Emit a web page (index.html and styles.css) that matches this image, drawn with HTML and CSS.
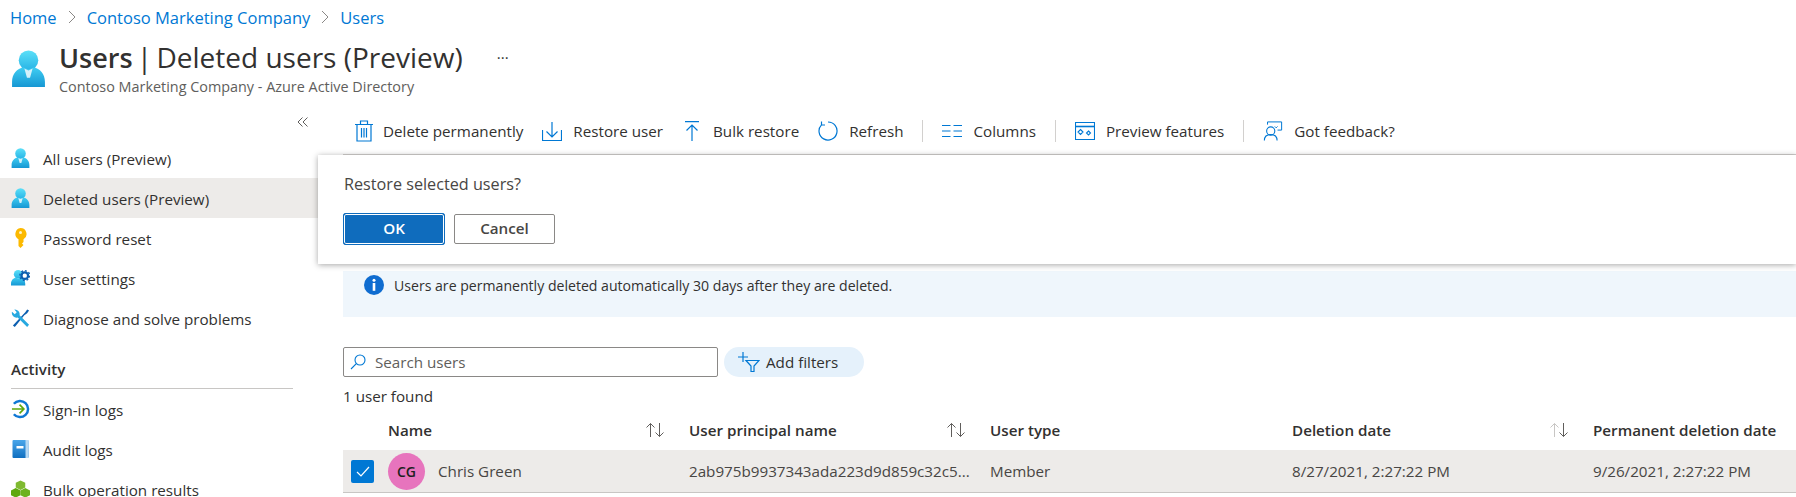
FILE: index.html
```html
<!DOCTYPE html>
<html lang="en">
<head>
    <meta charset="UTF-8">
    <meta name="viewport" content="width=device-width, initial-scale=1.0">
    <title>Users | Deleted users (Preview)</title>
    <link rel="stylesheet" href="styles.css">
</head>
<body>
    <svg class="defs" width="0" height="0" aria-hidden="true">
        <defs>
            <linearGradient id="userTop" x1="0" y1="0" x2="0" y2="1">
                <stop offset="0" stop-color="#5ce0f8"/>
                <stop offset="1" stop-color="#28b4e6"/>
            </linearGradient>
            <linearGradient id="userBody" x1="0" y1="0" x2="0" y2="1">
                <stop offset="0" stop-color="#3fcdf2"/>
                <stop offset="1" stop-color="#1697d3"/>
            </linearGradient>
            <linearGradient id="bookFill" x1="0" y1="0" x2="0" y2="1">
                <stop offset="0" stop-color="#4aa6ea"/>
                <stop offset="1" stop-color="#0f6fc0"/>
            </linearGradient>
            <symbol id="user" viewBox="0 0 32 36">
                <circle cx="16" cy="10" r="9.5" fill="url(#userTop)"/>
                <path d="M0 36v-5c0-8 5-13 11-14l5 2 5-2c6 1 11 6 11 14v5z" fill="url(#userBody)"/>
                <path d="M12 18l4 2 4-2-2.5 9h-3z" fill="#d5f1fa"/>
            </symbol>
        </defs>
    </svg>

    <nav class="crumbs">
        <a href="#">Home</a>
        <svg class="crumb-sep" viewBox="0 0 8 14"><path d="M1 1l6 6-6 6" fill="none" stroke="#8a8886" stroke-width="1"/></svg>
        <a href="#">Contoso Marketing Company</a>
        <svg class="crumb-sep" viewBox="0 0 8 14"><path d="M1 1l6 6-6 6" fill="none" stroke="#8a8886" stroke-width="1"/></svg>
        <a href="#">Users</a>
    </nav>

    <header class="page-head">
        <svg class="head-icon"><use href="#user"/></svg>
        <div class="head-text">
            <div class="head-line">
                <h1><b>Users</b><span class="bar"> | </span>Deleted users (Preview)</h1>
                <span class="more">···</span>
            </div>
            <p>Contoso Marketing Company - Azure Active Directory</p>
        </div>
    </header>

    <div class="layout">
        <aside class="sidebar">
            <div class="collapse">
                <svg viewBox="0 0 12 12" width="12" height="12"><path d="M5.5 1.5L1 6l4.500 4.500M10.500 1.500L6 6l4.500 4.500" fill="none" stroke="#605e5c" stroke-width="1"/></svg>
            </div>
            <a class="side-item" href="#"><svg class="side-icon"><use href="#user"/></svg>All users (Preview)</a>
            <a class="side-item active" href="#"><svg class="side-icon"><use href="#user"/></svg>Deleted users (Preview)</a>
            <a class="side-item" href="#">
                <svg class="side-icon" viewBox="0 0 18 20"><path d="M9 0a6 6 0 0 1 3 11.200V14l-1.500 1.500L12 17l-3 3-2-2V11.200A6 6 0 0 1 9 0z" fill="#fcb900"/><circle cx="9" cy="4.500" r="1.500" fill="#fff3c4"/></svg>
                Password reset
            </a>
            <a class="side-item" href="#">
                <svg class="side-icon" viewBox="0 0 20 20">
                    <circle cx="7.500" cy="6" r="4.500" fill="url(#userTop)"/>
                    <path d="M0 18v-2c0-4 3-6 5-6.500l2.500 1 2.500-1c3 .7 5 3 5 6.500v2z" fill="url(#userBody)"/>
                    <circle cx="14.500" cy="7.500" r="3.500" fill="none" stroke="#0c5fb0" stroke-width="2.400"/>
                    <circle cx="14.500" cy="7.500" r="5.200" fill="none" stroke="#0c5fb0" stroke-width="1.400" stroke-dasharray="2 2"/>
                </svg>
                User settings
            </a>
            <a class="side-item" href="#">
                <svg class="side-icon" viewBox="0 0 20 20">
                    <path d="M2 18L15 4l2-3 2 1-2 3-3 2L4 19.500z" fill="#0c5fb0"/>
                    <path d="M1 3.500L4 6l2-2-2.500-3A5 5 0 0 1 9 7l10 10-2 2.500L7 9.500A5 5 0 0 1 1 3.500z" fill="#27a9e0"/>
                </svg>
                Diagnose and solve problems
            </a>
            <div class="side-title">Activity</div>
            <a class="side-item" href="#">
                <svg class="side-icon" viewBox="0 0 20 20">
                    <path d="M3 4.500a8.500 8.500 0 1 1 0 11" fill="none" stroke="#0f78d4" stroke-width="2.600"/>
                    <path d="M1 10h12M9 5.500l4.500 4.500L9 14.500" fill="none" stroke="#5ea80d" stroke-width="1.800"/>
                </svg>
                Sign-in logs
            </a>
            <a class="side-item" href="#">
                <svg class="side-icon" viewBox="0 0 18 20">
                    <rect x="1" y="1" width="16" height="18" rx="1" fill="url(#bookFill)"/>
                    <rect x="14" y="1" width="3" height="18" fill="#b5d8f3"/>
                    <rect x="5" y="7" width="7" height="2.500" fill="#fff"/>
                </svg>
                Audit logs
            </a>
            <a class="side-item" href="#">
                <svg class="side-icon" viewBox="0 0 20 20">
                    <path d="M10 1l5 2.500v5L10 11 5 8.500v-5z" fill="#7fba30"/>
                    <path d="M5 9l5 2.500v5L5 19 0 16.500v-5z" fill="#5ea80d"/>
                    <path d="M15 9l5 2.500v5L15 19l-5-2.500v-5z" fill="#6cb21f"/>
                </svg>
                Bulk operation results
            </a>
        </aside>

        <main class="content">
            <div class="toolbar">
                <button class="tool">
                    <svg viewBox="0 0 18 22" class="tool-icon tool-trash"><path d="M0 4.500h18M5.500 4.500V1h7v3.500M2 4.500V21h14V4.500M6.500 8v9.500M9 8v9.500M11.500 8v9.500" fill="none" stroke="#0078d4" stroke-width="1.200"/></svg>
                    Delete permanently
                </button>
                <button class="tool">
                    <svg viewBox="0 0 20 20" class="tool-icon"><path d="M.500 9v10.500h19V9M10 1v15M4.500 10.500L10 16l5.500-5.500" fill="none" stroke="#0078d4" stroke-width="1.200"/></svg>
                    Restore user
                </button>
                <button class="tool">
                    <svg viewBox="0 0 20 20" class="tool-icon"><path d="M3 .700h14M10 20V4M4.500 9.500L10 4l5.500 5.500" fill="none" stroke="#0078d4" stroke-width="1.200"/></svg>
                    Bulk restore
                </button>
                <button class="tool">
                    <svg viewBox="0 0 20 20" class="tool-icon"><path d="M10 1a9 9 0 1 1-6.500 2.800M3.500 .500v3.500H7" fill="none" stroke="#0078d4" stroke-width="1.200"/></svg>
                    Refresh
                </button>
                <span class="tool-sep"></span>
                <button class="tool">
                    <svg viewBox="0 0 20 14" class="tool-icon tool-flat"><path d="M0 1.500h8.500M11.500 1.500H20M0 7h8.500M11.500 7H20M0 12.500h8.500M11.500 12.500H20" fill="none" stroke="#0078d4" stroke-width="1.200"/></svg>
                    Columns
                </button>
                <span class="tool-sep"></span>
                <button class="tool">
                    <svg viewBox="0 0 20 18" class="tool-icon"><path d="M.500.500h19v17H.500z" fill="none" stroke="#0078d4" stroke-width="1.100"/><path d="M.500 4.500h19" fill="none" stroke="#0078d4" stroke-width="1.600"/><path d="M5.500 7.500l2.500 2.500-2.500 2.500L3 10zM13.500 9l2 2-2 2-2-2z" fill="none" stroke="#0078d4" stroke-width="1.100"/></svg>
                    Preview features
                </button>
                <span class="tool-sep"></span>
                <button class="tool">
                    <svg viewBox="0 0 20 22" class="tool-icon"><path d="M4 4V1h15.500v9H15M12 6l1.500 1.500L15 6" fill="none" stroke="#0078d4" stroke-width="1.100"/><circle cx="7.500" cy="11" r="4.500" fill="none" stroke="#0078d4" stroke-width="1.200"/><path d="M.500 21.500c0-4 2.500-6.500 7-6.500s7 2.500 7 6.500" fill="none" stroke="#0078d4" stroke-width="1.200"/></svg>
                    Got feedback?
                </button>
            </div>

            <div class="banner">
                <svg viewBox="0 0 20 20" class="banner-icon"><circle cx="10" cy="10" r="10" fill="#0f6cd0"/><circle cx="10" cy="5.300" r="1.500" fill="#fff"/><rect x="8.700" y="8" width="2.600" height="7.800" fill="#fff"/></svg>
                Users are permanently deleted automatically 30 days after they are deleted.
            </div>

            <div class="filters">
                <label class="search">
                    <svg viewBox="0 0 16 16" class="search-icon"><circle cx="10" cy="6" r="5" fill="none" stroke="#0078d4" stroke-width="1.100"/><path d="M6.300 9.700L1 15" fill="none" stroke="#0078d4" stroke-width="1.100"/></svg>
                    <input type="text" placeholder="Search users">
                </label>
                <button class="pill">
                    <svg viewBox="0 0 22 20" class="pill-icon"><path d="M5 0v10M0 5h10" fill="none" stroke="#0078d4" stroke-width="1.200"/><path d="M8 8.500h13l-5 5.500v5.500h-3V14z" fill="none" stroke="#0078d4" stroke-width="1.200"/></svg>
                    Add filters
                </button>
            </div>

            <div class="count">1 user found</div>

            <div class="grid grid-head">
                <span></span>
                <span class="col-head">Name
                    <svg viewBox="0 0 20 16" class="sort"><path d="M5.500 15V1.500M1.500 5.500l4-4 4 4" fill="none" stroke="#605e5c"/><path d="M14.500 1v13.500M10.500 10.500l4 4 4-4" fill="none" stroke="#605e5c"/></svg>
                </span>
                <span class="col-head">User principal name
                    <svg viewBox="0 0 20 16" class="sort"><path d="M5.500 15V1.500M1.500 5.500l4-4 4 4" fill="none" stroke="#605e5c"/><path d="M14.500 1v13.500M10.500 10.500l4 4 4-4" fill="none" stroke="#605e5c"/></svg>
                </span>
                <span class="col-head">User type</span>
                <span class="col-head">Deletion date
                    <svg viewBox="0 0 20 16" class="sort"><path d="M5.500 15V1.500M1.500 5.500l4-4 4 4" fill="none" stroke="#c8c6c4"/><path d="M14.500 1v13.500M10.500 10.500l4 4 4-4" fill="none" stroke="#605e5c"/></svg>
                </span>
                <span class="col-head">Permanent deletion date</span>
            </div>

            <div class="grid grid-row">
                <span class="check">
                    <svg viewBox="0 0 23 23"><rect width="23" height="23" rx="2" fill="#0078d4"/><path d="M6 12l4 4 8-9" fill="none" stroke="#fff" stroke-width="1.200"/></svg>
                </span>
                <span class="name-cell"><span class="avatar">CG</span>Chris Green</span>
                <span class="upn">2ab975b9937343ada223d9d859c32c5...</span>
                <span>Member</span>
                <span>8/27/2021, 2:27:22 PM</span>
                <span>9/26/2021, 2:27:22 PM</span>
            </div>
        </main>
    </div>

    <div class="dialog">
        <p>Restore selected users?</p>
        <div class="dialog-btns">
            <button class="btn btn-ok">OK</button>
            <button class="btn">Cancel</button>
        </div>
    </div>
</body>
</html>
```

FILE: styles.css
```css
html, body {
    height: 497px;
    overflow: hidden;
}
body {
    position: relative;
    margin: 0;
    font-family: "Open Sans", "Noto Sans", Arial, sans-serif;
    font-size: 15.200px;
    color: #323130;
    background-color: #fff;
}
a {
    color: inherit;
    text-decoration: none;
}
button {
    font-family: inherit;
    font-size: inherit;
    color: inherit;
    border: 0;
    background: none;
    padding: 0;
}
.defs {
    position: absolute;
}

/* breadcrumb */
.crumbs {
    display: flex;
    align-items: center;
    gap: 11px;
    height: 34px;
    padding-left: 10px;
    font-size: 16.500px;
}
.crumbs a {
    color: #0078d4;
}
.crumb-sep {
    width: 8px;
    height: 14px;
}

/* page title */
.page-head {
    display: flex;
    gap: 14px;
    height: 71px;
    padding-left: 12px;
}
.head-icon {
    width: 33px;
    height: 37px;
    margin-top: 16px;
}
.head-line {
    display: flex;
    align-items: center;
    height: 46px;
}
.page-head h1 {
    margin: 0;
    font-size: 28px;
    font-weight: 400;
    line-height: 46px;
}
.page-head h1 b {
    font-size: 27px;
    font-weight: 600;
}
.bar {
    margin: 0 -3px;
}
.more {
    margin-left: 34px;
    font-size: 15px;
}
.page-head p {
    margin: -3px 0 0;
    font-size: 14.400px;
    color: #605e5c;
}

/* layout */
.layout {
    display: flex;
}
.sidebar {
    flex: none;
    width: 318px;
}
.collapse {
    display: flex;
    justify-content: flex-end;
    align-items: center;
    height: 33px;
    padding-right: 9px;
}
.side-item {
    display: flex;
    align-items: center;
    gap: 13px;
    height: 40px;
    padding: 2px 0 0 11px;
    box-sizing: border-box;
}
.side-item.active {
    background-color: #edebe9;
}
.side-icon {
    flex: none;
    width: 19px;
    height: 20px;
    margin-top: -2px;
}
.side-title {
    margin: 21px 25px 0 11px;
    padding-bottom: 9px;
    line-height: 20px;
    font-weight: 600;
    border-bottom: 1px solid #c8c6c4;
}

/* main */
.content {
    flex: 1;
    min-width: 0;
    margin-left: 25px;
}
.toolbar {
    display: flex;
    align-items: center;
    height: 46px;
    padding: 3px 0 0 12px;
    border-bottom: 2px solid #d2d0ce;
}
.tool {
    display: flex;
    align-items: center;
    gap: 11px;
    margin-right: 19px;
    white-space: nowrap;
}
.tool-icon {
    flex: none;
    width: 20px;
    height: 20px;
}
.tool-trash {
    width: 18px;
    height: 22px;
    margin-right: -1px;
}
.tool-flat {
    height: 14px;
}
.tool-sep {
    width: 1px;
    height: 22px;
    margin-right: 19px;
    background-color: #d2d0ce;
}
.banner {
    display: flex;
    align-items: center;
    gap: 10px;
    height: 46px;
    margin-top: 115px;
    padding: 0 0 18px 21px;
    box-sizing: border-box;
    font-size: 14.100px;
    background-color: #eff6fc;
}
.banner-icon {
    width: 20px;
    height: 20px;
}
.filters {
    display: flex;
    gap: 6px;
    margin-top: 30px;
}
.search {
    display: flex;
    align-items: center;
    gap: 7px;
    width: 375px;
    height: 30px;
    padding-left: 6px;
    box-sizing: border-box;
    border: 1px solid #8a8886;
    border-radius: 2px;
}
.search-icon {
    width: 16px;
    height: 16px;
}
.search input {
    flex: 1;
    min-width: 0;
    border: 0;
    outline: 0;
    font-family: inherit;
    font-size: inherit;
}
.search input::placeholder {
    color: #605e5c;
}
.pill {
    display: flex;
    align-items: center;
    gap: 6px;
    width: 140px;
    height: 30px;
    padding-left: 14px;
    box-sizing: border-box;
    border-radius: 15px;
    background-color: #e5f1fb;
}
.pill-icon {
    width: 22px;
    height: 20px;
}
.count {
    margin-top: 9px;
    line-height: 20px;
}
.grid {
    display: grid;
    grid-template-columns: 45px 301px 301px 302px 301px 1fr;
    align-items: center;
}
.grid-head {
    height: 44px;
    padding-top: 3px;
    box-sizing: border-box;
}
.col-head {
    display: flex;
    align-items: center;
    justify-content: space-between;
    padding-right: 24px;
    font-weight: 600;
    white-space: nowrap;
}
.sort {
    flex: none;
    width: 20px;
    height: 16px;
}
.grid-row {
    height: 43px;
    box-sizing: border-box;
    background-color: #edebe9;
    border-bottom: 1px solid #c8c6c4;
    white-space: nowrap;
    color: #484644;
}
.check {
    display: flex;
    padding-left: 8px;
}
.check svg {
    width: 23px;
    height: 23px;
}
.name-cell {
    display: flex;
    align-items: center;
    gap: 13px;
}
.avatar {
    display: flex;
    align-items: center;
    justify-content: center;
    width: 37px;
    height: 37px;
    border-radius: 50%;
    font-size: 14px;
    font-weight: 600;
    color: #201f1e;
    background-color: #e774bd;
}
.upn {
    overflow: hidden;
}

/* confirm popup over the page */
.dialog {
    position: absolute;
    left: 318px;
    top: 155px;
    right: 0;
    height: 109px;
    padding: 17px 26px;
    box-sizing: border-box;
    background-color: #fff;
    box-shadow: 0 1px 6px rgba(0, 0, 0, 0.35);
}
.dialog p {
    margin: 0;
    font-size: 16.200px;
    line-height: 24px;
    color: #484644;
}
.dialog-btns {
    display: flex;
    gap: 10px;
    margin-top: 18px;
}
.btn {
    width: 101px;
    height: 30px;
    padding-bottom: 2px;
    box-sizing: border-box;
    border: 1px solid #8a8886;
    border-radius: 2px;
    background-color: #fff;
    font-weight: 600;
    color: #484644;
}
.btn-ok {
    width: 100px;
    border: 1px solid #fff;
    outline: 1px solid #0f6cbd;
    box-shadow: 0 0 0 1px #0f6cbd;
    background-color: #0f6cbd;
    color: #fff;
}
```
